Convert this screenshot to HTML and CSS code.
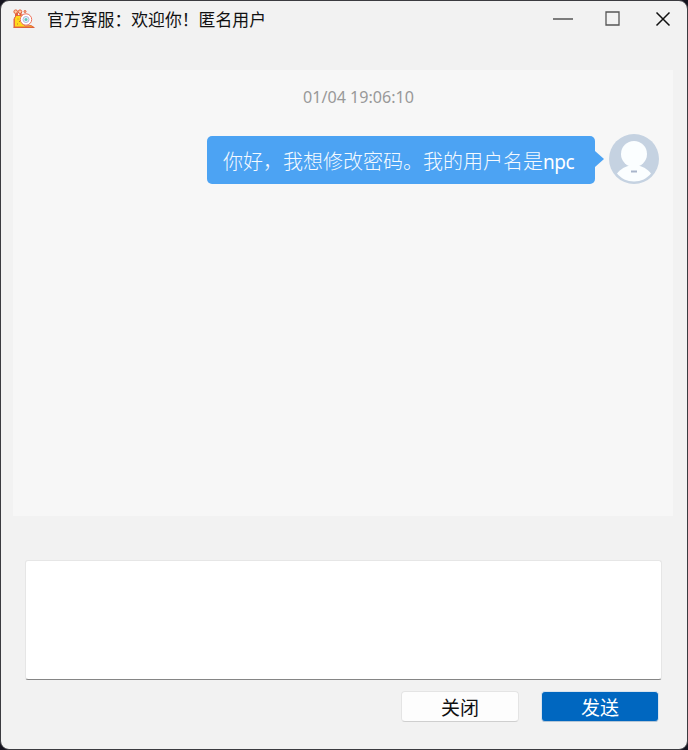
FILE: index.html
```
<!DOCTYPE html>
<html lang="zh-CN">
<head>
<meta charset="utf-8">
<title>官方客服</title>
<link rel="stylesheet" href="styles.css">
</head>
<body>
<div class="window">
  <header class="titlebar">
    <svg class="logo" viewBox="0 0 22 20">
      <path d="M1 18.500V10L2.500 7.500V5M9 8V5" fill="none" stroke="#e2603c"/>
      <path d="M1.500 18V9.500L3 6.500h5.500V14l4 3 5.500-.5 2.500 1.500z" fill="#ffd91c" stroke="#e2603c" stroke-width=".9"/>
      <path d="M4 7V4M7.500 7V4" stroke="#e2603c" stroke-width="2"/>
      <circle cx="2.700" cy="2.700" r="1.800" fill="#ffc9a0" stroke="#e2603c"/>
      <circle cx="7" cy="2.700" r="1.800" fill="#ffc9a0" stroke="#e2603c"/>
      <circle cx="12" cy="2.500" r="1" fill="#ffc9a0" stroke="#e2603c"/>
      <path d="M4.500 10h1M6 12.500h1M4 15h1" stroke="#c87520"/>
      <circle cx="13" cy="10.500" r="5.700" fill="#fff" stroke="#ee715a"/>
      <circle cx="13" cy="10.500" r="3" fill="#eaf4fa" stroke="#b0b4dc"/>
      <circle cx="13" cy="10.500" r="1.500" fill="#5fc7b5"/>
      <path d="M.5 18.500h21" stroke="#de623d"/>
    </svg>
    <h1 class="title">官方客服：欢迎你！匿名用户</h1>
    <div class="controls">
      <svg viewBox="0 0 22 16"><path d="M1 8h20" stroke="#555" stroke-width="1.600"/></svg>
      <svg viewBox="0 0 22 16"><path d="M4 1h13v13H4z" fill="none" stroke="#555" stroke-width="1.300"/></svg>
      <svg viewBox="0 0 22 16"><path d="M4.500 1.500l13 13M17.500 1.500l-13 13" stroke="#111" stroke-width="1.500"/></svg>
    </div>
  </header>
  <main class="chat">
    <time class="time">01/04 19:06:10</time>
    <div class="message">
      <div class="bubble">你好，我想修改密码。我的用户名是<span class="latin">npc</span></div>
      <svg class="tail" viewBox="0 0 9 16"><path d="M0 0l9 8-9 8z" fill="#4ca3f3"/></svg>
      <svg class="avatar" viewBox="0 0 50 50">
        <circle cx="25" cy="25" r="25" fill="#c5d2e1"/>
        <path d="M8 39.500C12 34.500 17 32 22 31.500h6c5 .5 10 3 14 8C38 44.500 32 47.500 25 47.500S12 44.500 8 39.500z" fill="#fbfeff"/>
        <circle cx="25" cy="20" r="13" fill="#fbfeff"/>
        <path d="M22 37.500h6" stroke="#a9b5cb" stroke-width="1.800"/>
      </svg>
    </div>
  </main>
  <textarea class="editor"></textarea>
  <footer class="actions">
    <button class="btn">关闭</button>
    <button class="btn primary">发送</button>
  </footer>
</div>
</body>
</html>
```
FILE: styles.css
```
* { box-sizing: border-box; }
body { margin: 0; background: #15141f; font-family: "Noto Sans", "Noto Sans CJK SC", sans-serif; }
.window { height: 750px; border: 1px solid #3b3b40; border-radius: 9px; background: #f2f2f2; overflow: hidden; display: flex; flex-direction: column; }
.titlebar { height: 36px; flex: none; display: flex; align-items: center; padding: 0 13px 0 12px; }
.logo { width: 22px; height: 20px; }
.title { margin: 0 0 0 12px; font: 400 16.85px/24px "Noto Sans CJK SC", sans-serif; color: #111; white-space: nowrap; }
.controls { margin-left: auto; display: flex; gap: 28px; }
.controls svg { width: 22px; height: 16px; }
.chat { margin: 33px 14px 0 12px; height: 446px; flex: none; background: #f7f7f7; }
.time { display: block; margin-left: 31px; padding-top: 16px; height: 64px; line-height: 22px; text-align: center; font-size: 16.1px; color: #999; }
.message { display: flex; justify-content: flex-end; align-items: center; padding-right: 14px; height: 50px; }
.bubble { width: 388px; height: 48px; padding-left: 16px; margin-top: 2px; border-radius: 5px; background: #4ca3f3; color: #f5faff; font: 300 20px/49px "Noto Sans CJK SC", sans-serif; white-space: nowrap; }
.latin { font: 400 19px "Noto Sans", sans-serif; letter-spacing: -.5px; color: #fff; }
.tail { width: 9px; height: 16px; flex: none; margin-right: 5px; }
.avatar { width: 50px; height: 50px; flex: none; }
.editor { display: block; flex: none; width: 637px; height: 120px; margin: 44px 0 0 24px; padding: 8px; border: 1px solid #e6e6e6; border-bottom-color: #858585; border-radius: 3px; background: #fff; resize: none; outline: 0; }
.actions { display: flex; justify-content: flex-end; gap: 22px; padding: 11px 28px 0 0; }
.btn { width: 118px; height: 31px; padding: 0; border: 1px solid #e4e4e4; border-bottom-color: #cfcfcf; border-radius: 4px; background: #fdfdfd; color: #111; font: 400 19px/29px "Noto Sans CJK SC", sans-serif; }
.primary { border-color: #d9e4ee #d9e4ee #b5c6d6; background: #0067c0; color: #fff; }
```
